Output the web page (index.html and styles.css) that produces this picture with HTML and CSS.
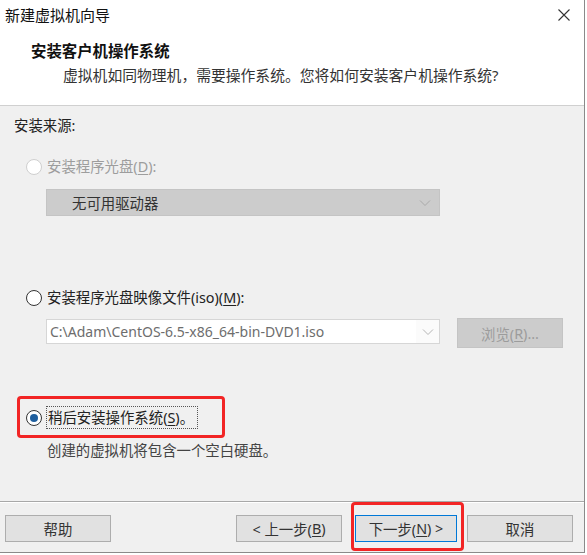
FILE: index.html
```html
<!DOCTYPE html>
<html lang="zh-CN">
<head>
<meta charset="utf-8">
<title>新建虚拟机向导</title>
<link rel="stylesheet" href="styles.css">
</head>
<body>
<div class="window">
  <div class="titlebar">
    <span class="title">新建虚拟机向导</span>
    <svg class="close" width="14" height="14" viewBox="0 0 14 14"><path d="M1.5 1.5 L12.5 12.5 M12.5 1.5 L1.5 12.5" stroke="#333" stroke-width="1.1" fill="none"/></svg>
  </div>
  <div class="header">
    <h1 class="heading">安装客户机操作系统</h1>
    <p class="subtitle">虚拟机如同物理机，需要操作系统。您将如何安装客户机操作系统?</p>
  </div>
  <div class="content">
    <div class="section-label">安装来源:</div>
    <div class="options">
      <div class="radio disabled"><span class="circle"></span><span class="rtext">安装程序光盘(<u>D</u>):</span></div>
      <div class="select disabled">
        <span class="select-text">无可用驱动器</span>
        <svg class="chev" width="12" height="8" viewBox="0 0 12 8"><path d="M1 1.5 L6 6.5 L11 1.5" stroke="#aaa" stroke-width="1" fill="none"/></svg>
      </div>
      <div class="radio r2"><span class="circle"></span><span class="rtext">安装程序光盘映像文件(iso)(<u>M</u>):</span></div>
      <div class="iso-row">
        <div class="combo">
          <span class="combo-text">C:\Adam\CentOS-6.5-x86_64-bin-DVD1.iso</span>
          <span class="combo-btn"><svg width="12" height="8" viewBox="0 0 12 8"><path d="M1 1.5 L6 6.5 L11 1.5" stroke="#b5b5b5" stroke-width="1" fill="none"/></svg></span>
        </div>
        <div class="btn browse">浏览(<u>R</u>)...</div>
      </div>
      <div class="later">
        <div class="radio checked"><span class="circle"><span class="dot"></span></span><span class="rtext focus">稍后安装操作系统(<u>S</u>)。</span></div>
        <div class="highlight hl-later"></div>
      </div>
      <p class="hint">创建的虚拟机将包含一个空白硬盘。</p>
    </div>
  </div>
  <div class="footer">
    <div class="btn help">帮助</div>
    <div class="btn back">&lt; 上一步(<u>B</u>)</div>
    <div class="next-wrap">
      <div class="btn next">下一步(<u>N</u>) &gt;</div>
      <div class="highlight hl-next"></div>
    </div>
    <div class="btn cancel">取消</div>
  </div>
</div>
</body>
</html>
```
FILE: styles.css
```css
* { box-sizing: border-box; }
html, body { margin: 0; padding: 0; background: #ffffff; }
body {
  font-family: "Noto Sans", "Noto Sans CJK SC", sans-serif;
  font-size: 14.4px;
  color: #222;
}
u { text-decoration: underline; text-underline-offset: 2px; }
.window {
  width: 585px;
  height: 553px;
  border-right: 1px solid #8a8a8a;
  border-bottom: 1px solid #8a8a8a;
  background: #f0f0f0;
  display: flex;
  flex-direction: column;
}
.titlebar {
  height: 29px;
  background: #fff;
  display: flex;
  align-items: center;
  justify-content: space-between;
  padding: 0 13px 0 5px;
}
.title { font-size: 15px; color: #111; line-height: 20px; }
.close { display: block; }
.header {
  height: 77px;
  background: #fff;
  border-bottom: 1px solid #d0d0d0;
  padding: 13px 0 0 31px;
}
.heading {
  margin: 0;
  font-size: 15.4px;
  font-weight: 700;
  line-height: 20px;
  color: #111;
}
.subtitle {
  margin: 3px 0 0 32px;
  font-size: 14.8px;
  line-height: 20px;
  color: #333;
}
.content {
  flex: 1;
  padding: 10px 0 0 14px;
  border-bottom: 1px solid #a8a8a8;
}
.section-label { line-height: 20px; color: #222; }
.options { margin: 21px 0 0 12px; }
.radio {
  display: flex;
  align-items: center;
  height: 20px;
}
.circle {
  width: 16px;
  height: 16px;
  border-radius: 50%;
  border: 1px solid #333;
  background: #fff;
  display: flex;
  align-items: center;
  justify-content: center;
  flex: none;
}
.rtext { margin-left: 5px; line-height: 20px; color: #222; }
.radio.disabled .circle { border-color: #cfcfcf; }
.radio.disabled .rtext { color: #9d9d9d; }
.dot { width: 8px; height: 8px; border-radius: 50%; background: #1f5f9e; }
.select {
  margin: 12px 0 0 20px;
  width: 394px;
  height: 27px;
  background: #cccccc;
  border: 1px solid #c4c4c4;
  display: flex;
  align-items: center;
  justify-content: space-between;
  padding: 0 8px 0 25px;
}
.select-text { color: #333; }
.chev { display: block; }
.r2 { margin-top: 72px; }
.iso-row {
  margin: 10px 0 0 20px;
  display: flex;
  align-items: flex-start;
}
.combo {
  margin-top: 1px;
  width: 394px;
  height: 25px;
  background: #fff;
  border: 1px solid #d6d6d6;
  display: flex;
  align-items: center;
}
.combo-text {
  flex: 1;
  padding-left: 3px;
  color: #6d6d6d;
  font-size: 14px;
  white-space: nowrap;
}
.combo-btn {
  width: 23px;
  height: 100%;
  background: #fbfbfb;
  display: flex;
  align-items: center;
  justify-content: center;
}
.btn {
  height: 27px;
  width: 106px;
  background: #e1e1e1;
  border: 1px solid #adadad;
  display: flex;
  align-items: center;
  justify-content: center;
  color: #333;
  font-size: 14.4px;
}
.browse {
  margin-left: 17px;
  height: 30px;
  background: #cccccc;
  border-color: #c4c4c4;
  color: #9c9c9c;
}
.later { position: relative; margin-top: 58px; }
.later .radio { height: 23px; }
.focus {
  border: 1px dotted #555;
  padding: 0 3px 0 1px;
  line-height: 21px;
  margin-left: 4px;
}
.highlight {
  position: absolute;
  border: 3px solid #f22525;
  border-radius: 4px;
  pointer-events: none;
}
.hl-later { left: -9px; top: -10px; width: 208px; height: 42px; }
.hint { margin: 12px 0 0 21px; line-height: 20px; color: #444; }
.footer {
  height: 50px;
  border-top: 1px solid #fff;
  display: flex;
  align-items: flex-start;
  padding: 12px 0 0 5px;
}
.back { margin-left: 125px; width: 106px; }
.next-wrap { position: relative; margin-left: 13px; }
.next { width: 102px; border-color: #0078d7; }
.hl-next { left: -4px; top: -13px; width: 113px; height: 49px; }
.cancel { margin-left: 10px; width: 106px; }
```
